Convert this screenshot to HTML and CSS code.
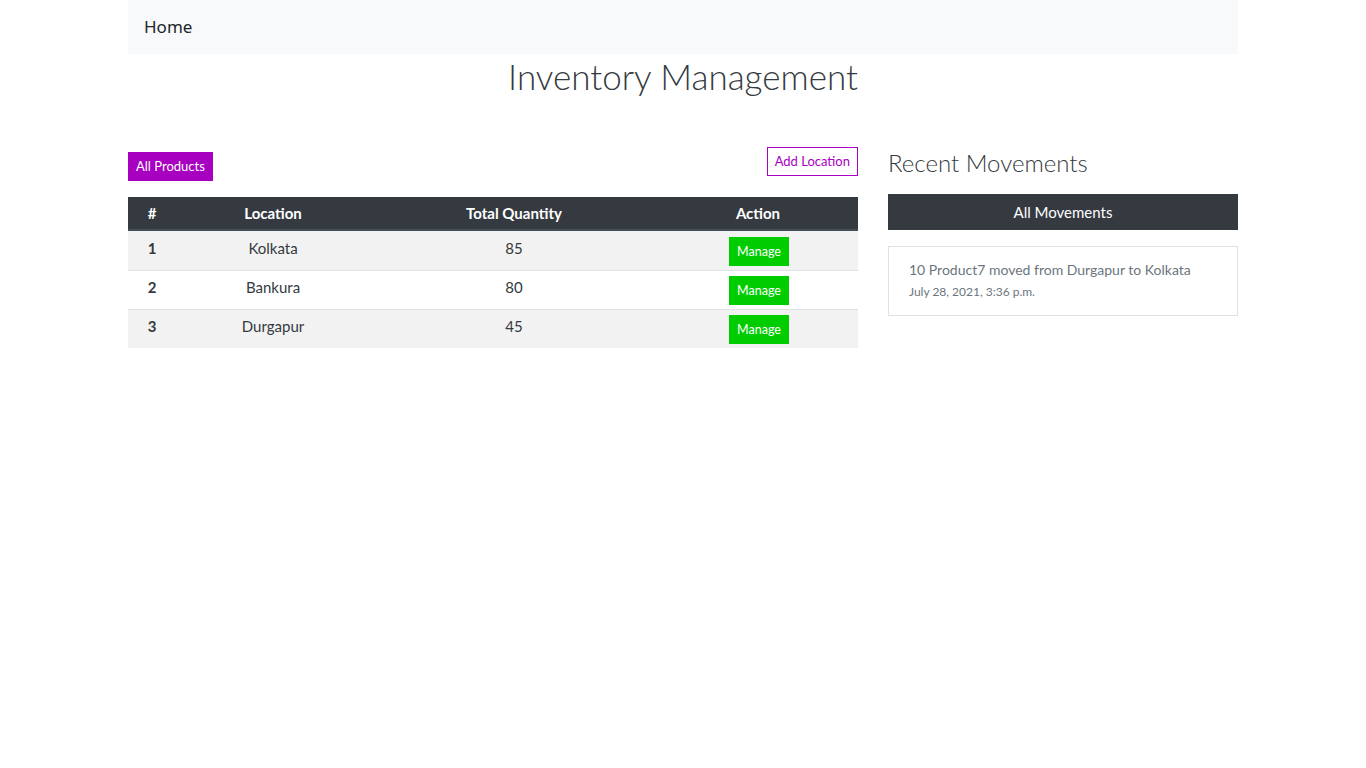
FILE: index.html
```html
<!DOCTYPE html>
<html>
<head>
<meta charset="utf-8">
<title>Inventory Management</title>
<link rel="stylesheet" href="styles.css">
</head>
<body>
<div class="container">
  <nav class="navbar"><a class="brand" href="#">Home</a></nav>
  <h1 class="title">Inventory Management</h1>
  <div class="row">
    <div class="col-main">
      <div class="toolbar">
        <a class="btn btn-purple" href="#">All Products</a>
        <a class="btn btn-outline" href="#">Add Location</a>
      </div>
      <table class="table">
        <thead>
          <tr><th class="c1">#</th><th class="c2">Location</th><th class="c3">Total Quantity</th><th class="c4">Action</th></tr>
        </thead>
        <tbody>
          <tr class="odd"><th>1</th><td>Kolkata</td><td>85</td><td><a class="btn btn-green" href="#">Manage</a></td></tr>
          <tr><th>2</th><td>Bankura</td><td>80</td><td><a class="btn btn-green" href="#">Manage</a></td></tr>
          <tr class="odd"><th>3</th><td>Durgapur</td><td>45</td><td><a class="btn btn-green" href="#">Manage</a></td></tr>
        </tbody>
      </table>
    </div>
    <div class="col-side">
      <h3 class="side-title">Recent Movements</h3>
      <a class="all-mov" href="#">All Movements</a>
      <div class="card">
        <p class="mov-text">10 Product7 moved from Durgapur to Kolkata</p>
        <small class="mov-date">July 28, 2021, 3:36 p.m.</small>
      </div>
    </div>
  </div>
</div>
</body>
</html>
```
FILE: styles.css
```css
* { box-sizing: border-box; }
body {
  margin: 0;
  font-family: "Lato", "Open Sans", sans-serif;
  font-size: 15px;
  color: #212529;
  background: #fff;
}
a { text-decoration: none; }
.container {
  width: 1110px;
  margin: 0 auto;
}
.navbar {
  background: #f8f9fa;
  height: 54px;
  display: flex;
  align-items: center;
  padding: 0 16px;
}
.brand {
  font-family: "Noto Sans", sans-serif;
  font-size: 17px;
  color: #212529;
  margin-top: -1px;
}
.title {
  margin: 0;
  text-align: center;
  font-weight: 300;
  font-size: 35px;
  line-height: 44px;
  padding-bottom: 4px;
  color: #343a40;
}
.row {
  display: flex;
  gap: 30px;
  margin-top: 45px;
}
.col-main { width: 730px; }
.col-side { width: 350px; }
.toolbar {
  display: flex;
  justify-content: space-between;
  align-items: flex-start;
  height: 50px;
}
.btn {
  display: inline-block;
  font-size: 13px;
  line-height: 19px;
  padding: 4px 7px;
  border: 1px solid transparent;
}
.btn-purple {
  background: #a700c0;
  color: #fff;
  margin-top: 5px;
}
.btn-outline {
  border-color: #a700c0;
  color: #a700c0;
  background: #fff;
}
.table {
  width: 100%;
  border-collapse: collapse;
  text-align: center;
  font-size: 15px;
}
.table thead th {
  background: #343a40;
  color: #fff;
  font-weight: 700;
  height: 33px;
  padding: 0;
  border-bottom: 2px solid #454d55;
}
.c1 { width: 48px; }
.c2 { width: 194px; }
.c3 { width: 288px; }
.table tbody th, .table tbody td {
  padding: 5px 5px 4px;
  vertical-align: top;
  line-height: 23px;
  border-top: 1px solid #dee2e6;
  color: #343a40;
}
.table tbody tr:first-child th, .table tbody tr:first-child td { border-top: 0; padding-top: 6px; }
.table tbody th { font-weight: 700; }
.table tbody tr.odd { background: #f2f2f2; }
.btn-green {
  background: #00cc00;
  color: #fff;
  font-size: 12.5px;
  padding: 4px 7px;
  margin-left: 2px;
}
.side-title {
  margin: 0;
  font-weight: 300;
  font-size: 24px;
  line-height: 32px;
  color: #343a40;
  height: 47px;
}
.all-mov {
  display: block;
  background: #343a40;
  color: #fff;
  text-align: center;
  font-size: 15px;
  line-height: 36px;
  height: 36px;
}
.card {
  margin-top: 16px;
  border: 1px solid #dee2e6;
  padding: 12px 20px 14px;
}
.mov-text {
  margin: 0;
  color: #6c757d;
  font-size: 14px;
  line-height: 22px;
}
.mov-date {
  display: block;
  margin-top: 2px;
  color: #6c757d;
  font-size: 12px;
  line-height: 18px;
}
```
